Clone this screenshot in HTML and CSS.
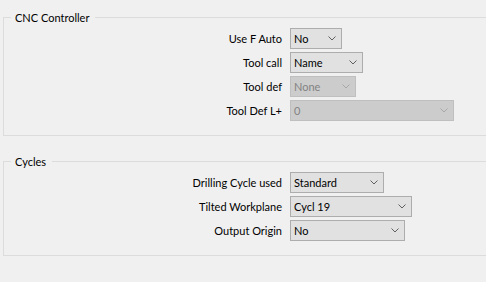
FILE: index.html
```html
<!DOCTYPE html>
<html lang="en">
<head>
    <meta charset="UTF-8">
    <meta name="viewport" content="width=device-width, initial-scale=1.0">
    <title>Controller settings</title>
    <link rel="stylesheet" href="styles.css">
</head>
<body>
    <div class="settings-page">
        <fieldset class="group">
            <legend>CNC Controller</legend>
            <div class="rows">
                <label class="row-label">Use F Auto</label>
                <div class="combo w-52">
                    <span class="combo-text">No</span>
                    <svg class="chevron" width="8" height="5" viewBox="0 0 8 5"><path d="M0.5 0.5 L4 4 L7.5 0.5"/></svg>
                </div>

                <label class="row-label">Tool call</label>
                <div class="combo w-73">
                    <span class="combo-text">Name</span>
                    <svg class="chevron" width="8" height="5" viewBox="0 0 8 5"><path d="M0.5 0.5 L4 4 L7.5 0.5"/></svg>
                </div>

                <label class="row-label">Tool def</label>
                <div class="combo disabled w-66">
                    <span class="combo-text">None</span>
                    <svg class="chevron" width="8" height="5" viewBox="0 0 8 5"><path d="M0.5 0.5 L4 4 L7.5 0.5"/></svg>
                </div>

                <label class="row-label">Tool Def L+</label>
                <div class="combo disabled w-164">
                    <span class="combo-text">0</span>
                    <svg class="chevron" width="8" height="5" viewBox="0 0 8 5"><path d="M0.5 0.5 L4 4 L7.5 0.5"/></svg>
                </div>
            </div>
        </fieldset>

        <fieldset class="group">
            <legend>Cycles</legend>
            <div class="rows">
                <label class="row-label">Drilling Cycle used</label>
                <div class="combo w-94">
                    <span class="combo-text">Standard</span>
                    <svg class="chevron" width="8" height="5" viewBox="0 0 8 5"><path d="M0.5 0.5 L4 4 L7.5 0.5"/></svg>
                </div>

                <label class="row-label">Tilted Workplane</label>
                <div class="combo w-122">
                    <span class="combo-text">Cycl 19</span>
                    <svg class="chevron" width="8" height="5" viewBox="0 0 8 5"><path d="M0.5 0.5 L4 4 L7.5 0.5"/></svg>
                </div>

                <label class="row-label">Output Origin</label>
                <div class="combo w-115">
                    <span class="combo-text">No</span>
                    <svg class="chevron" width="8" height="5" viewBox="0 0 8 5"><path d="M0.5 0.5 L4 4 L7.5 0.5"/></svg>
                </div>
            </div>
        </fieldset>
    </div>
</body>
</html>
```

FILE: styles.css
```css
/* Janela de configuracao */
body {
    margin: 0;
    padding: 0;
    background: #f0f0f0;
    font-family: "Segoe UI", Lato, "Liberation Sans", Arial, sans-serif;
    font-size: 11px;
    color: #000;
    overflow: hidden;
}

.settings-page {
    padding-top: 10px;
    padding-left: 3px;
}

/* a caixa continua alem da borda direita da janela */
.group {
    margin: 0 0 18px 0;
    padding: 3px 0 14px 0;
    border: 1px solid #dcdcdc;
    border-right: none;
    min-width: 0;
}

.group legend {
    margin-left: 7px;
    padding: 0 6px 0 4px;
    line-height: 15px;
}

.rows {
    display: grid;
    grid-template-columns: 278px auto;
    column-gap: 8px;
    row-gap: 3px;
    justify-items: start;
}

.row-label {
    justify-self: end;
    line-height: 21px;
}

/* Combo box */
.combo {
    box-sizing: border-box;
    height: 21px;
    display: flex;
    align-items: center;
    justify-content: space-between;
    padding: 0 5px 0 3px;
    background: #e1e1e1;
    border: 1px solid #adadad;
}

.combo-text {
    line-height: 19px;
}

.chevron {
    fill: none;
    stroke: #606060;
    stroke-width: 1;
}

.combo.disabled {
    background: #cccccc;
    border-color: #bfbfbf;
    color: #838383;
}

.combo.disabled .chevron {
    stroke: #a8a8a8;
}

.w-52 { width: 52px; }
.w-66 { width: 66px; }
.w-73 { width: 73px; }
.w-94 { width: 94px; }
.w-115 { width: 115px; }
.w-122 { width: 122px; }
.w-164 { width: 164px; }
```
